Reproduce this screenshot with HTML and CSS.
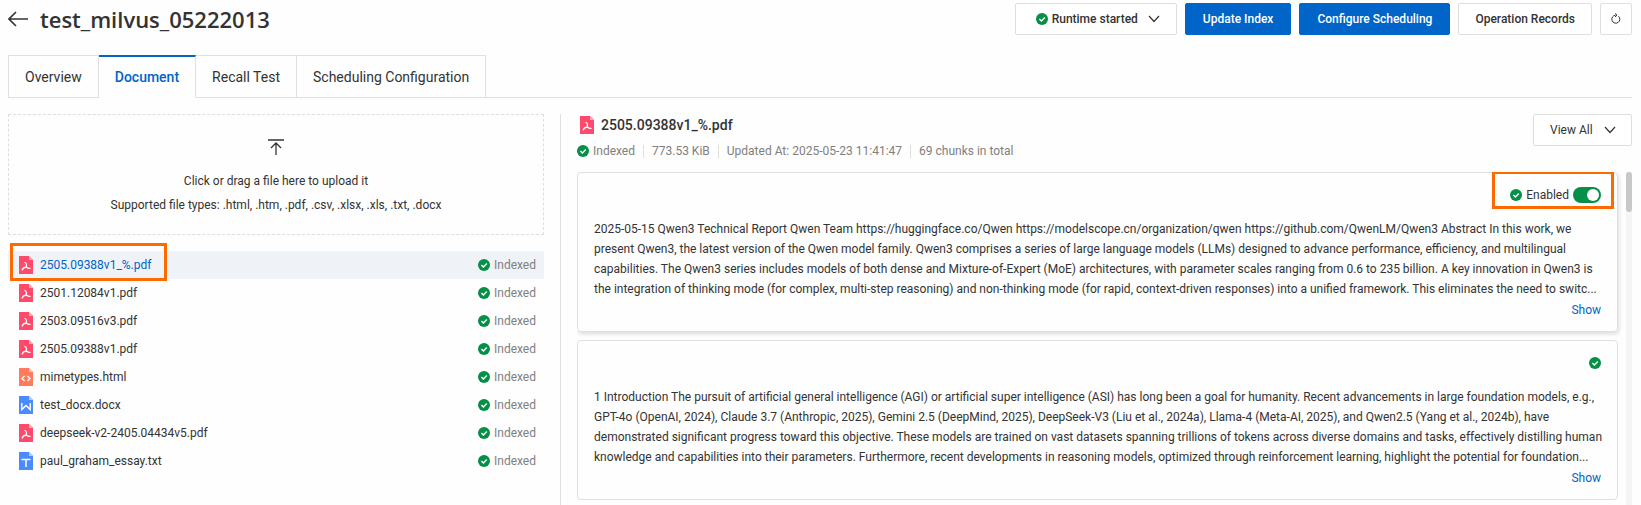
FILE: index.html
```html
<!DOCTYPE html>
<html lang="en">
<head>
    <meta charset="UTF-8">
    <meta name="viewport" content="width=device-width, initial-scale=1.0">
    <title>test_milvus_05222013</title>
    <link rel="stylesheet" href="styles.css">
</head>
<body>
    <svg class="sprite" aria-hidden="true">
        <symbol id="icon-check" viewBox="0 0 12 12">
            <circle cx="6" cy="6" r="6" fill="#068f46"/>
            <path d="M3.4 5.9l2 2 3.4-3.5" fill="none" stroke="#fff" stroke-width="1.4"/>
        </symbol>
        <symbol id="icon-chevron" viewBox="0 0 12 8">
            <path d="M1 1l5 5.500 5-5.500" fill="none" stroke="currentColor" stroke-width="1.200"/>
        </symbol>
        <symbol id="icon-pdf" viewBox="0 0 14 18">
            <path d="M0 0h10l4 4v14H0z" fill="#ff4a6b"/>
            <path d="M10 0l4 4h-4z" fill="#ffa6b6"/>
            <path d="M6 6.500c1.500.5 1.600 2.800 1.300 4.500M3.200 14c.5-1.500 2-2.700 4.100-3M7.300 11c.8.900 2 1.400 3.700 1.400" fill="none" stroke="#fff" stroke-width="1.300" stroke-linecap="round"/>
        </symbol>
        <symbol id="icon-html" viewBox="0 0 14 18">
            <path d="M0 0h10l4 4v14H0z" fill="#ff7b5c"/>
            <path d="M10 0l4 4h-4z" fill="#ffc1b2"/>
            <path d="M5.500 8L3 10.500 5.500 13M8.500 8l2.500 2.500L8.500 13" fill="none" stroke="#fff" stroke-width="1.400"/>
        </symbol>
        <symbol id="icon-docx" viewBox="0 0 14 18">
            <path d="M0 0h10l4 4v14H0z" fill="#4a8cff"/>
            <path d="M10 0l4 4h-4z" fill="#b0ccff"/>
            <path d="M2.800 7v6.500L7 9.500l4.200 4V7" fill="none" stroke="#fff" stroke-width="1.400"/>
        </symbol>
        <symbol id="icon-txt" viewBox="0 0 14 18">
            <path d="M0 0h10l4 4v14H0z" fill="#4a8cff"/>
            <path d="M10 0l4 4h-4z" fill="#b0ccff"/>
            <path d="M2.500 7.500h9M7 7.500V15" fill="none" stroke="#fff" stroke-width="1.500"/>
        </symbol>
    </svg>

    <header class="page-header">
        <a class="back" href="#" aria-label="Back">
            <svg width="20" height="16" viewBox="0 0 20 16"><path d="M8 1L1 8l7 7M1 8h19" fill="none" stroke="currentColor" stroke-width="1.600"/></svg>
        </a>
        <h1>test_milvus_05222013</h1>
        <div class="actions">
            <button class="btn btn-runtime" type="button" aria-haspopup="menu">
                <svg class="check"><use href="#icon-check"/></svg>
                <span>Runtime started</span>
                <svg class="chevron"><use href="#icon-chevron"/></svg>
            </button>
            <button class="btn btn-primary" type="button">Update Index</button>
            <button class="btn btn-primary" type="button">Configure Scheduling</button>
            <button class="btn" type="button">Operation Records</button>
            <button class="btn btn-icon" type="button" aria-label="Refresh">
                <svg width="10" height="12" viewBox="0 0 10 12"><path d="M7.500 3.200A4 4 0 1 1 4.500 2.200M4 .5l2 1.700L4 4" fill="none" stroke="currentColor"/></svg>
            </button>
        </div>
    </header>

    <nav class="tabs">
        <a class="tab" href="#">Overview</a>
        <a class="tab active" href="#">Document</a>
        <a class="tab" href="#">Recall Test</a>
        <a class="tab" href="#">Scheduling Configuration</a>
    </nav>

    <main class="content">
        <section class="files">
            <label class="upload">
                <input type="file" class="upload-input" multiple>
                <svg width="16" height="16" viewBox="0 0 16 16"><path d="M0 1h16M8 16V4M3 9l5-5 5 5" fill="none" stroke="currentColor" stroke-width="1.300"/></svg>
                <span>Click or drag a file here to upload it</span>
                <span>Supported file types: .html, .htm, .pdf, .csv, .xlsx, .xls, .txt, .docx</span>
            </label>

            <ul class="file-list">
                <li class="file selected">
                    <svg class="file-icon"><use href="#icon-pdf"/></svg>
                    <a href="#">2505.09388v1_%.pdf</a>
                    <span class="status"><svg class="check"><use href="#icon-check"/></svg>Indexed</span>
                    <span class="highlight highlight-file"></span>
                </li>
                <li class="file">
                    <svg class="file-icon"><use href="#icon-pdf"/></svg>
                    <a href="#">2501.12084v1.pdf</a>
                    <span class="status"><svg class="check"><use href="#icon-check"/></svg>Indexed</span>
                </li>
                <li class="file">
                    <svg class="file-icon"><use href="#icon-pdf"/></svg>
                    <a href="#">2503.09516v3.pdf</a>
                    <span class="status"><svg class="check"><use href="#icon-check"/></svg>Indexed</span>
                </li>
                <li class="file">
                    <svg class="file-icon"><use href="#icon-pdf"/></svg>
                    <a href="#">2505.09388v1.pdf</a>
                    <span class="status"><svg class="check"><use href="#icon-check"/></svg>Indexed</span>
                </li>
                <li class="file">
                    <svg class="file-icon"><use href="#icon-html"/></svg>
                    <a href="#">mimetypes.html</a>
                    <span class="status"><svg class="check"><use href="#icon-check"/></svg>Indexed</span>
                </li>
                <li class="file">
                    <svg class="file-icon"><use href="#icon-docx"/></svg>
                    <a href="#">test_docx.docx</a>
                    <span class="status"><svg class="check"><use href="#icon-check"/></svg>Indexed</span>
                </li>
                <li class="file">
                    <svg class="file-icon"><use href="#icon-pdf"/></svg>
                    <a href="#">deepseek-v2-2405.04434v5.pdf</a>
                    <span class="status"><svg class="check"><use href="#icon-check"/></svg>Indexed</span>
                </li>
                <li class="file">
                    <svg class="file-icon"><use href="#icon-txt"/></svg>
                    <a href="#">paul_graham_essay.txt</a>
                    <span class="status"><svg class="check"><use href="#icon-check"/></svg>Indexed</span>
                </li>
            </ul>
        </section>

        <section class="document">
            <div class="doc-header">
                <div class="doc-info">
                    <h2><svg class="file-icon"><use href="#icon-pdf"/></svg>2505.09388v1_%.pdf</h2>
                    <div class="meta">
                        <span class="status"><svg class="check"><use href="#icon-check"/></svg>Indexed</span>
                        <span class="meta-item">773.53 KiB</span>
                        <span class="meta-item">Updated At: 2025-05-23 11:41:47</span>
                        <span class="meta-item">69 chunks in total</span>
                    </div>
                </div>
                <div class="filter">
                    <select aria-label="Chunk filter">
                        <option>View All</option>
                        <option>Enabled</option>
                        <option>Disabled</option>
                    </select>
                    <svg class="chevron"><use href="#icon-chevron"/></svg>
                </div>
            </div>

            <div class="chunk-area">
                <div class="chunks">
                    <article class="chunk raised">
                        <div class="chunk-head">
                            <svg class="check"><use href="#icon-check"/></svg>
                            <label for="chunk1">Enabled</label>
                            <input class="switch" type="checkbox" id="chunk1" checked>
                        </div>
                        <p>2025-05-15 Qwen3 Technical Report Qwen Team https://huggingface.co/Qwen https://modelscope.cn/organization/qwen https://github.com/QwenLM/Qwen3 Abstract In this work, we<br>
                        present Qwen3, the latest version of the Qwen model family. Qwen3 comprises a series of large language models (LLMs) designed to advance performance, efficiency, and multilingual<br>
                        capabilities. The Qwen3 series includes models of both dense and Mixture-of-Expert (MoE) architectures, with parameter scales ranging from 0.6 to 235 billion. A key innovation in Qwen3 is<br>
                        the integration of thinking mode (for complex, multi-step reasoning) and non-thinking mode (for rapid, context-driven responses) into a unified framework. This eliminates the need to switc...</p>
                        <button class="show" type="button">Show</button>
                        <span class="highlight highlight-switch"></span>
                    </article>
                    <article class="chunk">
                        <div class="chunk-head">
                            <svg class="check"><use href="#icon-check"/></svg>
                        </div>
                        <p>1 Introduction The pursuit of artificial general intelligence (AGI) or artificial super intelligence (ASI) has long been a goal for humanity. Recent advancements in large foundation models, e.g.,<br>
                        GPT-4o (OpenAI, 2024), Claude 3.7 (Anthropic, 2025), Gemini 2.5 (DeepMind, 2025), DeepSeek-V3 (Liu et al., 2024a), Llama-4 (Meta-AI, 2025), and Qwen2.5 (Yang et al., 2024b), have<br>
                        demonstrated significant progress toward this objective. These models are trained on vast datasets spanning trillions of tokens across diverse domains and tasks, effectively distilling human<br>
                        knowledge and capabilities into their parameters. Furthermore, recent developments in reasoning models, optimized through reinforcement learning, highlight the potential for foundation...</p>
                        <button class="show" type="button">Show</button>
                    </article>
                </div>
                <div class="scrollbar"><div class="thumb"></div></div>
            </div>
        </section>
    </main>
</body>
</html>
```
FILE: styles.css
```css
* {
    box-sizing: border-box;
}
body {
    margin: 0;
    padding: 3px 9px 0 8px;
    height: 100vh;
    overflow: hidden;
    display: flex;
    flex-direction: column;
    font-family: Roboto, "Open Sans", sans-serif;
    font-size: 12px;
    line-height: 20px;
    color: #333;
    background: #fefefe;
}
h1, h2, p, ul {
    margin: 0;
    padding: 0;
}
a {
    color: inherit;
    text-decoration: none;
}
button, select {
    font: inherit;
    color: inherit;
    cursor: pointer;
}
svg {
    flex: none;
    display: block;
}
.sprite {
    position: absolute;
    width: 0;
    height: 0;
}
.check {
    width: 12px;
    height: 12px;
}
.chevron {
    width: 12px;
    height: 8px;
}
.file-icon {
    width: 14px;
    height: 18px;
}

/* header */
.page-header {
    display: flex;
    align-items: center;
    gap: 12px;
}
.page-header h1 {
    font-family: "Open Sans", sans-serif;
    font-size: 22px;
    line-height: 32px;
    font-weight: 600;
}
.actions {
    display: flex;
    gap: 8px;
    margin-left: auto;
}
.btn {
    height: 32px;
    padding: 0 16px;
    border: 1px solid #dedede;
    border-radius: 2px;
    background: #fff;
    font-weight: 500;
    white-space: nowrap;
}
.btn-primary {
    padding: 0 17px;
    background: #0064c8;
    border-color: #0064c8;
    color: #fff;
}
.btn-runtime {
    display: flex;
    align-items: center;
    gap: 4px;
    padding: 0 16px 0 20px;
}
.btn-runtime .chevron {
    margin-left: 6px;
}
.btn-icon {
    width: 32px;
    padding: 0;
    display: flex;
    align-items: center;
    justify-content: center;
}

/* tabs */
.tabs {
    display: flex;
    margin-top: 20px;
    border-bottom: 1px solid #e0e0e0;
}
.tab {
    height: 43px;
    margin-bottom: -1px;
    padding: 11px 16px 0;
    border: 1px solid #e0e0e0;
    border-left-width: 0;
    font-size: 14px;
}
.tab:first-child {
    border-left-width: 1px;
}
.tab.active {
    padding-top: 10px;
    border-top: 2px solid #0064c8;
    border-bottom-color: #fefefe;
    color: #0064c8;
    font-weight: 500;
}

/* content */
.content {
    flex: 1;
    min-height: 0;
    display: grid;
    grid-template-columns: minmax(0, 553fr) minmax(0, 1071fr);
    margin-top: 16px;
}
.files {
    padding-right: 16px;
    border-right: 1px solid #e0e0e0;
}
.upload {
    display: flex;
    flex-direction: column;
    align-items: center;
    gap: 4px;
    padding: 24px 16px 19px;
    border: 1px dashed #dedede;
    cursor: pointer;
}
.upload svg {
    margin-bottom: 12px;
}
.upload-input {
    display: none;
}
.file-list {
    margin-top: 16px;
    list-style: none;
}
.file {
    position: relative;
    display: flex;
    align-items: center;
    gap: 7px;
    height: 28px;
    padding: 0 8px 0 11px;
}
.file.selected {
    background: #eff2f7;
    color: #0064c8;
}
.status {
    display: flex;
    align-items: center;
    gap: 4px;
    color: #808080;
}
.file .status {
    margin-left: auto;
}
.highlight {
    position: absolute;
    border: 3px solid #ff6a00;
    pointer-events: none;
}
.highlight-file {
    top: -8px;
    left: 2px;
    width: 157px;
    height: 38px;
}
.highlight-switch {
    top: -2px;
    right: 3px;
    width: 122px;
    height: 38px;
}

/* document */
.document {
    display: flex;
    flex-direction: column;
    min-height: 0;
    padding-left: 16px;
}
.doc-header {
    display: flex;
    justify-content: space-between;
    align-items: flex-start;
}
.doc-header h2 {
    display: flex;
    align-items: center;
    gap: 7px;
    padding: 1px 0 0 3px;
    font-size: 14px;
    line-height: 20px;
    font-weight: 500;
}
.meta {
    display: flex;
    align-items: center;
    margin-top: 6px;
    color: #808080;
}
.meta-item {
    display: flex;
    align-items: center;
}
.meta-item::before {
    content: "";
    width: 1px;
    height: 13px;
    margin: 0 8px;
    background: #dedede;
}
.filter {
    position: relative;
    color: #333;
}
.filter select {
    height: 32px;
    padding: 0 34px 0 16px;
    border: 1px solid #dedede;
    border-radius: 2px;
    background: #fff;
    appearance: none;
}
.filter .chevron {
    position: absolute;
    top: 12px;
    right: 16px;
    pointer-events: none;
}
.chunk-area {
    flex: 1;
    min-height: 0;
    display: flex;
    gap: 8px;
    margin-top: 11px;
    overflow: hidden;
}
.chunks {
    flex: 1;
    min-width: 0;
    display: flex;
    flex-direction: column;
    gap: 8px;
}
.chunk {
    position: relative;
    display: flex;
    flex-direction: column;
    padding: 12px 16px 11px;
    border: 1px solid #e0e0e0;
    border-radius: 4px;
}
.chunk.raised {
    box-shadow: 1px 2px 4px rgba(0, 0, 0, 0.14);
}
.chunk-head {
    display: flex;
    align-items: center;
    justify-content: flex-end;
    gap: 4px;
    height: 20px;
    margin-bottom: 14px;
}
.chunk p {
    white-space: nowrap;
}
.switch {
    width: 28px;
    height: 16px;
    margin: 0;
    padding: 2px;
    display: flex;
    appearance: none;
    border-radius: 8px;
    background: #b3b3b3;
    cursor: pointer;
}
.switch::before {
    content: "";
    width: 12px;
    height: 12px;
    border-radius: 50%;
    background: #fff;
}
.switch:checked {
    justify-content: flex-end;
    background: #068f46;
}
.show {
    align-self: flex-end;
    margin-top: 1px;
    padding: 0;
    border: 0;
    background: none;
    color: #0064c8;
}
.scrollbar {
    width: 6px;
    background: #f5f5f5;
}
.thumb {
    height: 40px;
    border-radius: 3px;
    background: #c8c8c8;
}
```
